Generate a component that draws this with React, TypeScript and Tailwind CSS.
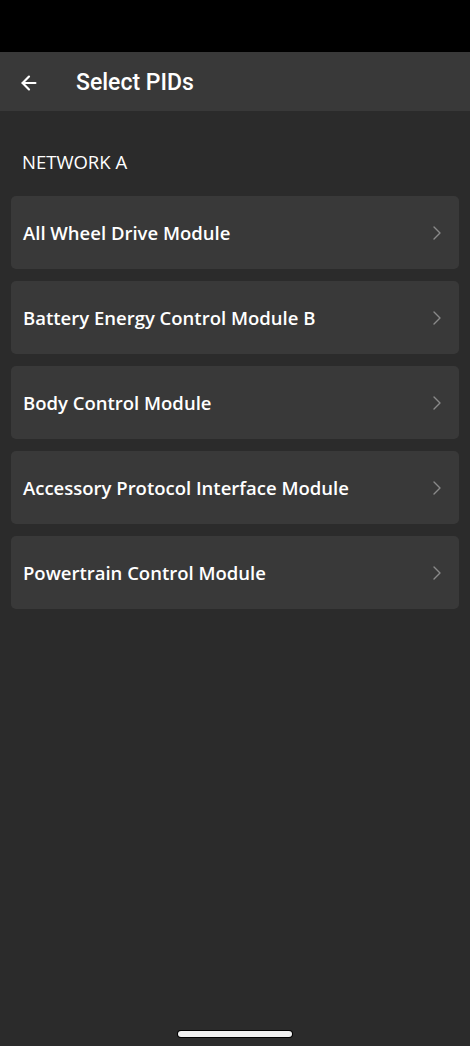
import { ArrowLeft } from 'lucide-react'

const modules = [
  'All Wheel Drive Module',
  'Battery Energy Control Module B',
  'Body Control Module',
  'Accessory Protocol Interface Module',
  'Powertrain Control Module',
]

function Chevron() {
  return (
    <svg width="10" height="16" viewBox="0 0 10 16" fill="none" className="text-[#8a8a8a]">
      <path d="M2 2 L8 8 L2 14" stroke="currentColor" strokeWidth="1.4" strokeLinecap="round" strokeLinejoin="round" />
    </svg>
  )
}

export default function App() {
  return (
    <div className="w-[470px] h-[1046px] bg-[#2b2b2b] flex flex-col overflow-hidden">
      {/* status bar */}
      <div className="h-[52px] bg-black shrink-0" />

      {/* header */}
      <div className="h-[59px] bg-[#393939] flex items-center pt-[3px] shrink-0">
        <div className="w-[76px] flex items-center pl-[18px]">
          <ArrowLeft size={22} strokeWidth={2.4} className="text-white" />
        </div>
        <h1 className="text-white text-[23px] font-medium" style={{ fontFamily: 'Roboto, sans-serif' }}>
          Select PIDs
        </h1>
      </div>

      {/* content */}
      <div className="flex-1 flex flex-col px-[11px]" style={{ fontFamily: '"Open Sans", sans-serif' }}>
        <p className="text-white text-[18.5px] pl-[11px] pt-[38px] pb-[22px] leading-[25px]">NETWORK A</p>
        <div className="flex flex-col gap-[12px]">
          {modules.map((name) => (
            <div
              key={name}
              className="h-[73px] bg-[#393939] rounded-[5px] flex items-center justify-between pl-[12px] pr-[17px]"
            >
              <span className="text-white text-[18.5px] font-semibold">{name}</span>
              <Chevron />
            </div>
          ))}
        </div>
        <div className="flex-1" />
        <div className="flex justify-center pb-[9px]">
          <div className="w-[114px] h-[6px] rounded-full bg-[#f0f0f0] ring-1 ring-black" />
        </div>
      </div>
    </div>
  )
}
